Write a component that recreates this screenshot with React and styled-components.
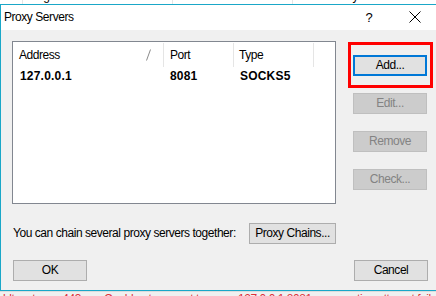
import React from "react";
import styled, { createGlobalStyle } from "styled-components";

const Global = createGlobalStyle`
  html, body { margin: 0; padding: 0; }
  body {
    width: 436px; height: 296px; overflow: hidden;
    background: #f4f4f4;
    font-family: "Liberation Sans", Arial, sans-serif;
    font-size: 12px; color: #000;
  }
`;

const Page = styled.div`
  display: flex;
  flex-direction: column;
  width: 436px;
  height: 296px;
  overflow: hidden;
  letter-spacing: -0.45px;
`;

const BackStrip = styled.div`
  height: 4px;
  overflow: hidden;
  background: #fff;
  display: flex;
`;

const BackCol = styled.div`
  width: ${(p) => p.$w}px;
  flex: none;
  border-left: 1px solid ${(p) => (p.$sep ? "#e5e5e5" : "transparent")};
  padding-left: 5px;
  box-sizing: border-box;
  line-height: 14px;
  margin-top: -11px;
  height: 15px;
  color: #000;
  white-space: nowrap;
`;

const Dialog = styled.div`
  position: relative;
  width: 437px;
  height: 287px;
  flex: none;
  box-sizing: border-box;
  border: 1px solid #1aa7c8;
  display: flex;
  flex-direction: column;
  background: #f0f0f0;
`;

const TitleBar = styled.div`
  height: 25px;
  background: #fff;
  display: flex;
  align-items: center;
  padding-left: 3px;
`;

const Title = styled.div`
  flex: 1;
  font-size: 12px;
  padding-bottom: 1px;
`;

const HelpMark = styled.div`
  width: 14px;
  font-size: 13px;
  margin-right: 33px;
  text-align: center;
`;

const CloseBox = styled.div`
  width: 12px;
  height: 12px;
  margin-right: 15px;
  display: flex;
`;

const Body = styled.div`
  flex: 1;
  display: flex;
  flex-direction: column;
  padding: 11px 0 0 11px;
`;

const MainRow = styled.div`
  display: flex;
  align-items: flex-start;
`;

const ListBox = styled.div`
  width: 324px;
  height: 163px;
  box-sizing: border-box;
  border: 1px solid #828790;
  background: #fff;
  display: flex;
  flex-direction: column;
`;

const HeaderRow = styled.div`
  display: flex;
  height: 24px;
  padding-top: 1px;
`;

const HeaderCell = styled.div`
  position: relative;
  width: ${(p) => p.$w}px;
  box-sizing: border-box;
  border-right: 1px solid #e5e5e5;
  padding-left: ${(p) => p.$pad}px;
  display: flex;
  align-items: center;
  color: #000;
`;

const SortMark = styled.svg`
  position: absolute;
  right: 12px;
  top: 6px;
`;

const DataRow = styled.div`
  display: flex;
  height: 19px;
  align-items: center;
`;

const DataCell = styled.div`
  width: ${(p) => p.$w}px;
  box-sizing: border-box;
  padding-left: ${(p) => p.$pad}px;
  font-weight: bold;
  letter-spacing: 0.2px;
`;

const ButtonColumn = styled.div`
  display: flex;
  flex-direction: column;
  gap: 17px;
  margin-left: 17px;
  padding-top: 14px;
  position: relative;
`;

const Button = styled.div`
  width: ${(p) => p.$w || 74}px;
  height: 21px;
  box-sizing: border-box;
  display: flex;
  align-items: center;
  justify-content: center;
  background: ${(p) => (p.$disabled ? "#cccccc" : "#e1e1e1")};
  border: ${(p) => (p.$focus ? "2px solid #0078d7" : p.$disabled ? "1px solid #bfbfbf" : "1px solid #adadad")};
  color: ${(p) => (p.$disabled ? "#838383" : "#000")};
  white-space: nowrap;
  flex: none;
`;

const Highlight = styled.div`
  position: absolute;
  left: -5px;
  top: 1px;
  width: 85px;
  height: 46px;
  box-sizing: border-box;
  border: 3px solid #f00;
  pointer-events: none;
`;

const ChainRow = styled.div`
  display: flex;
  align-items: center;
  margin-top: 19px;
  padding-left: 1px;
`;

const ChainLabel = styled.div`
  width: 236px;
  white-space: nowrap;
`;

const Footer = styled.div`
  display: flex;
  justify-content: space-between;
  margin-top: 16px;
  padding: 0 8px 0 1px;
`;

const LogStrip = styled.div`
  height: 5px;
  overflow: hidden;
  background: #f0f0f0;
  border-top: 1px solid #dcdcdc;
`;

const LogText = styled.div`
  color: #e0303a;
  white-space: pre;
  line-height: 14px;
  padding-left: 3px;
`;

export default function App() {
  return (
    <>
      <Global />
      <Page>
        <BackStrip>
          <BackCol $w={22} />
          <BackCol $w={150} $sep>Target</BackCol>
          <BackCol $w={120} $sep>Time/Status</BackCol>
          <BackCol $w={144} $sep>Rule / Proxy</BackCol>
        </BackStrip>
        <Dialog>
          <TitleBar>
            <Title>Proxy Servers</Title>
            <HelpMark>?</HelpMark>
            <CloseBox>
              <svg width="12" height="12" viewBox="0 0 12 12">
                <path d="M0.5 0.5 L11.5 11.5 M11.5 0.5 L0.5 11.5" stroke="#000" strokeWidth="1" fill="none" />
              </svg>
            </CloseBox>
          </TitleBar>
          <Body>
            <MainRow>
              <ListBox>
                <HeaderRow>
                  <HeaderCell $w={151} $pad={6}>
                    Address
                    <SortMark width="5" height="12" viewBox="0 0 5 12">
                      <path d="M4.5 0.5 L0.5 11.5" stroke="#8a8a8a" strokeWidth="1" fill="none" />
                    </SortMark>
                  </HeaderCell>
                  <HeaderCell $w={70} $pad={6}>Port</HeaderCell>
                  <HeaderCell $w={80} $pad={5}>Type</HeaderCell>
                </HeaderRow>
                <DataRow>
                  <DataCell $w={151} $pad={7}>127.0.0.1</DataCell>
                  <DataCell $w={70} $pad={6}>8081</DataCell>
                  <DataCell $w={80} $pad={6}>SOCKS5</DataCell>
                </DataRow>
              </ListBox>
              <ButtonColumn>
                <Highlight />
                <Button $focus>Add...</Button>
                <Button $disabled>Edit...</Button>
                <Button $disabled>Remove</Button>
                <Button $disabled>Check...</Button>
              </ButtonColumn>
            </MainRow>
            <ChainRow>
              <ChainLabel>You can chain several proxy servers together:</ChainLabel>
              <Button $w={87}>Proxy Chains...</Button>
            </ChainRow>
            <Footer>
              <Button>OK</Button>
              <Button>Cancel</Button>
            </Footer>
          </Body>
        </Dialog>
        <LogStrip>
          <LogText>{"ldtogst.com:443        Could not connect to proxy 127.0.0.1:8081 - connection attempt failed with error"}</LogText>
        </LogStrip>
      </Page>
    </>
  );
}
